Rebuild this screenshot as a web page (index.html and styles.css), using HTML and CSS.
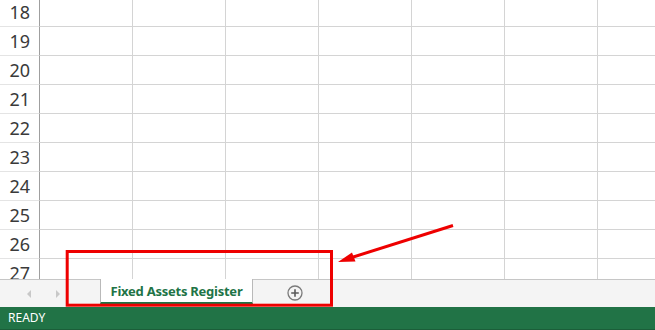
FILE: index.html
```html
<!DOCTYPE html>
<html lang="en">
<head>
    <meta charset="UTF-8">
    <meta name="viewport" content="width=device-width, initial-scale=1.0">
    <title>Fixed Assets Register</title>
    <link rel="stylesheet" href="styles.css">
</head>
<body>
    <div class="window">
        <!-- sheet grid -->
        <div class="sheet">
            <div class="grid">
                <div class="row"><div class="num">18</div><div class="cell"></div><div class="cell"></div><div class="cell"></div><div class="cell"></div><div class="cell"></div><div class="cell"></div><div class="cell"></div></div>
                <div class="row"><div class="num">19</div><div class="cell"></div><div class="cell"></div><div class="cell"></div><div class="cell"></div><div class="cell"></div><div class="cell"></div><div class="cell"></div></div>
                <div class="row"><div class="num">20</div><div class="cell"></div><div class="cell"></div><div class="cell"></div><div class="cell"></div><div class="cell"></div><div class="cell"></div><div class="cell"></div></div>
                <div class="row"><div class="num">21</div><div class="cell"></div><div class="cell"></div><div class="cell"></div><div class="cell"></div><div class="cell"></div><div class="cell"></div><div class="cell"></div></div>
                <div class="row"><div class="num">22</div><div class="cell"></div><div class="cell"></div><div class="cell"></div><div class="cell"></div><div class="cell"></div><div class="cell"></div><div class="cell"></div></div>
                <div class="row"><div class="num">23</div><div class="cell"></div><div class="cell"></div><div class="cell"></div><div class="cell"></div><div class="cell"></div><div class="cell"></div><div class="cell"></div></div>
                <div class="row"><div class="num">24</div><div class="cell"></div><div class="cell"></div><div class="cell"></div><div class="cell"></div><div class="cell"></div><div class="cell"></div><div class="cell"></div></div>
                <div class="row"><div class="num">25</div><div class="cell"></div><div class="cell"></div><div class="cell"></div><div class="cell"></div><div class="cell"></div><div class="cell"></div><div class="cell"></div></div>
                <div class="row"><div class="num">26</div><div class="cell"></div><div class="cell"></div><div class="cell"></div><div class="cell"></div><div class="cell"></div><div class="cell"></div><div class="cell"></div></div>
                <div class="row"><div class="num">27</div><div class="cell"></div><div class="cell"></div><div class="cell"></div><div class="cell"></div><div class="cell"></div><div class="cell"></div><div class="cell"></div></div>
            </div>
        </div>

        <!-- sheet tabs -->
        <div class="tabbar">
            <div class="nav">
                <svg class="nav-arrow" width="6" height="10" viewBox="0 0 6 10"><path d="M5 1 L1 5 L5 9 Z" fill="#c8c8c8"/></svg>
                <svg class="nav-arrow" width="6" height="10" viewBox="0 0 6 10"><path d="M1 1 L5 5 L1 9 Z" fill="#c8c8c8"/></svg>
            </div>
            <div class="tab">Fixed Assets Register</div>
            <svg class="add-sheet" width="16" height="16" viewBox="0 0 16 16">
                <circle cx="8" cy="8" r="7" fill="none" stroke="#7a7a7a" stroke-width="1.3"/>
                <path d="M8 4.2 V11.8 M4.2 8 H11.8" stroke="#5a5a5a" stroke-width="1.6"/>
            </svg>
        </div>

        <!-- status bar -->
        <div class="status">READY</div>

        <!-- annotation -->
        <svg class="annot" width="655" height="330" viewBox="0 0 655 330">
            <rect x="67.2" y="251.5" width="264.3" height="53.7" fill="none" stroke="#ee0000" stroke-width="3"/>
            <line x1="453" y1="225.5" x2="350" y2="258" stroke="#ee0000" stroke-width="3"/>
            <path d="M338 262 L352 252.5 L355.5 261.5 Z" fill="#ee0000"/>
        </svg>
    </div>
</body>
</html>
```

FILE: styles.css
```css
*{box-sizing: border-box;}
body{margin: 0; overflow: hidden; background: #fff;}

.window{
    position: relative;
    width: 655px;
    height: 330px;
    display: flex;
    flex-direction: column;
    font-family: "Noto Sans", "Open Sans", sans-serif;
}

.sheet{
    height: 279px;
    overflow: hidden;
}
.sheet .grid{
    margin-top: -2px;
}
.sheet .row{
    display: flex;
    height: 29px;
}
.sheet .num{
    width: 40px;
    flex: none;
    border-right: 1px solid #9f9f9f;
    border-bottom: 1px solid #e4e4e4;
    text-align: right;
    padding-right: 9px;
    font-size: 18px;
    line-height: 28px;
    color: #3a3a3a;
}
.sheet .cell{
    width: 93px;
    flex: none;
    border-right: 1px solid #d4d4d4;
    border-bottom: 1px solid #d4d4d4;
}

.tabbar{
    height: 28px;
    background: #f4f4f4;
    border-top: 1px solid #c6c6c6;
    display: flex;
    align-items: flex-start;
}
.tabbar .nav{
    width: 100px;
    height: 27px;
    display: flex;
    align-items: center;
    gap: 23px;
    padding-left: 26px;
}
.tabbar .tab{
    margin-top: -1px;
    width: 153px;
    height: 25px;
    background: #fff;
    border-left: 1px solid #b9b9b9;
    border-right: 1px solid #b9b9b9;
    border-bottom: 2px solid #217346;
    text-align: center;
    font-size: 13px;
    font-weight: bold;
    letter-spacing: -0.25px;
    line-height: 24px;
    color: #217346;
}
.tabbar .add-sheet{
    margin-left: 34px;
    margin-top: 5px;
}

.status{
    height: 23px;
    background: #217346;
    border-bottom: 1px solid #1b5e39;
    color: #fff;
    font-size: 12px;
    line-height: 22px;
    padding-left: 8px;
}

.annot{
    position: absolute;
    left: 0;
    top: 0;
    pointer-events: none;
}
```
